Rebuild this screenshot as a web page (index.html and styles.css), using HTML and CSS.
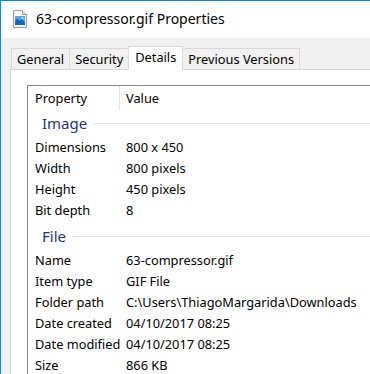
FILE: index.html
```html
<!DOCTYPE html>
<html>
<head>
    <title>63-compressor.gif Properties</title>
    <link rel="stylesheet" href="styles.css">
</head>
<body>
    <div class="window">
        <div class="titlebar">
            <svg class="file-icon" width="14" height="18" viewBox="0 0 14 18">
                <path d="M0.5 0.5 H9.5 L13.5 4.5 V17.5 H0.5 Z" fill="#ffffff" stroke="#9a9a9a"/>
                <path d="M9.5 0.5 V4.5 H13.5" fill="#e8e8e8" stroke="#9a9a9a"/>
                <rect x="2" y="6" width="10" height="9" fill="#5aa6ea"/>
                <path d="M2 15 V11 L4.5 8.5 L6.5 11 L8.5 9 L12 12.5 V15 Z" fill="#1565c0"/>
                <circle cx="9.5" cy="8" r="0.9" fill="#d6ecff"/>
            </svg>
            <span class="title">63-compressor.gif Properties</span>
        </div>
        <div class="dialog">
            <div class="tabs">
                <div class="tab">General</div>
                <div class="tab">Security</div>
                <div class="tab active">Details</div>
                <div class="tab">Previous Versions</div>
            </div>
            <div class="panel">
                <div class="listview">
                    <div class="lv-header">
                        <div class="col-prop">Property</div>
                        <div class="col-value">Value</div>
                    </div>

                    <div class="group"><span>Image</span></div>
                    <div class="row"><div class="col-prop">Dimensions</div><div class="col-value">800 x 450</div></div>
                    <div class="row"><div class="col-prop">Width</div><div class="col-value">800 pixels</div></div>
                    <div class="row"><div class="col-prop">Height</div><div class="col-value">450 pixels</div></div>
                    <div class="row"><div class="col-prop">Bit depth</div><div class="col-value">8</div></div>

                    <div class="group next"><span>File</span></div>
                    <div class="row"><div class="col-prop">Name</div><div class="col-value">63-compressor.gif</div></div>
                    <div class="row"><div class="col-prop">Item type</div><div class="col-value">GIF File</div></div>
                    <div class="row"><div class="col-prop">Folder path</div><div class="col-value">C:\Users\ThiagoMargarida\Downloads</div></div>
                    <div class="row"><div class="col-prop">Date created</div><div class="col-value">04/10/2017 08:25</div></div>
                    <div class="row"><div class="col-prop">Date modified</div><div class="col-value">04/10/2017 08:25</div></div>
                    <div class="row"><div class="col-prop">Size</div><div class="col-value">866 KB</div></div>
                </div>
            </div>
        </div>
    </div>
</body>
</html>
```

FILE: styles.css
```css
html, body {
    margin: 0;
    height: 100%;
    overflow: hidden;
}

body {
    font-family: 'Noto Sans', sans-serif;
    font-size: 12.8px;
    color: #000;
    background: #f0f0f0;
}

.window {
    height: 100%;
    border-top: 1px solid #1883d7;
    border-left: 1px solid #1883d7;
    box-sizing: border-box;
}

.titlebar {
    display: flex;
    align-items: center;
    height: 37px;
    background: #ffffff;
    padding-left: 12px;
}

.file-icon {
    margin-right: 9px;
    margin-top: -1px;
}

.title {
    font-size: 14px;
    color: #000;
    margin-top: -2px;
}

.dialog {
    padding: 8px 0 0 9px;
}

.tabs {
    display: flex;
    align-items: flex-end;
    height: 23px;
    position: relative;
    z-index: 1;
    padding-left: 1px;
}

.tab {
    height: 20px;
    line-height: 20px;
    padding: 0 5px;
    border: 1px solid #d9d9d9;
    border-bottom: none;
    border-left: none;
    background: #f0f0f0;
    white-space: nowrap;
}

.tab:first-child {
    border-left: 1px solid #d9d9d9;
}

.tab.active {
    height: 23px;
    line-height: 20px;
    background: #ffffff;
    border-left: 1px solid #d9d9d9;
    margin-left: -1px;
    margin-bottom: -1px;
    padding: 0 6px;
}

.tab.active + .tab {
    border-left: none;
}

.panel {
    background: #ffffff;
    border: 1px solid #d9d9d9;
    border-right: none;
    height: 400px;
    padding: 15px 0 0 16px;
}

.listview {
    border: 1px solid #828790;
    border-right: none;
    height: 400px;
}

.lv-header {
    display: flex;
    height: 24px;
    align-items: center;
}

.lv-header .col-prop {
    border-right: 1px solid #e5e5e5;
    height: 24px;
    line-height: 25px;
}

.col-prop {
    width: 84px;
    padding-left: 7px;
    flex-shrink: 0;
    white-space: nowrap;
}

.col-value {
    padding-left: 6px;
    white-space: nowrap;
}

.group {
    display: flex;
    align-items: center;
    height: 25px;
    margin-bottom: 2px;
    padding-left: 14px;
    font-size: 15px;
    color: #1e3287;
}

.group.next {
    margin-top: 2px;
}

.group::after {
    content: "";
    flex: 1;
    height: 1px;
    margin-left: 6px;
    margin-top: 1px;
    background: #e2e5ef;
}

.row {
    display: flex;
    height: 21px;
    line-height: 21px;
}

.row .col-value {
    padding-left: 7px;
}
```
